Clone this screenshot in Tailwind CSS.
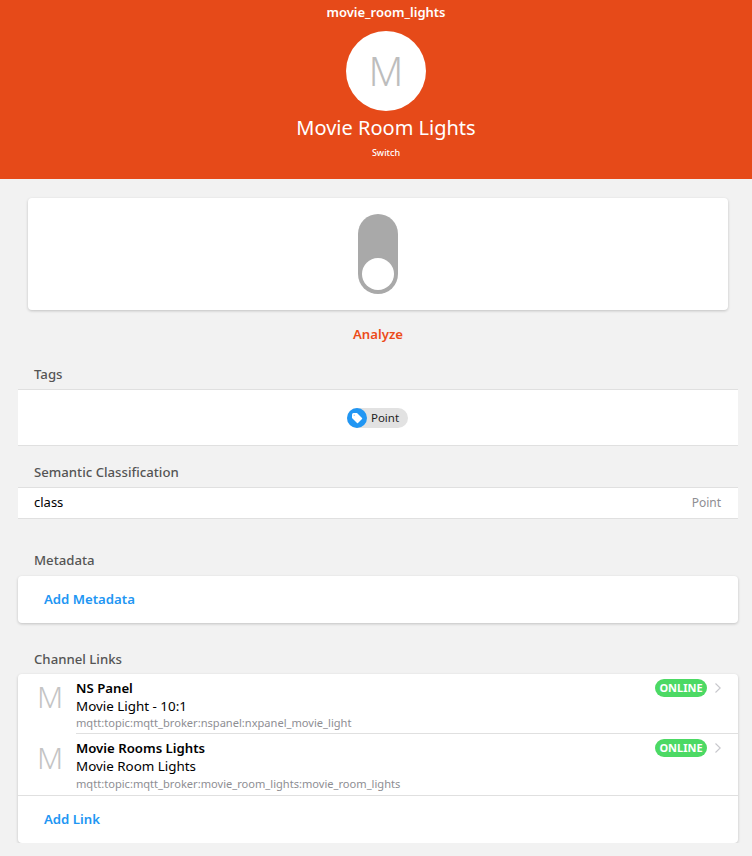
<!DOCTYPE html>
<html lang="en">
<head>
    <meta charset="UTF-8">
    <title>movie_room_lights</title>
    <script src="https://cdn.jsdelivr.net/npm/@tailwindcss/browser@4"></script>
</head>
<body class="bg-[#f2f2f2] font-['Noto_Sans',sans-serif] text-[14px] text-black overflow-hidden">

    <!-- Page is wider than the window, the right side gets cut off -->
    <div class="w-[772px]">

    <!-- Header -->
    <div class="h-[179px] bg-[#e64a19] text-white flex flex-col items-center">
        <div class="h-[25px] leading-[25px] text-[13px] font-semibold">movie_room_lights</div>
        <div class="mt-[6px] w-[80px] h-[80px] rounded-full bg-white flex items-center justify-center text-[#bdbdbd] text-[40px] font-light leading-none">M</div>
        <div class="mt-[3px] h-[28px] leading-[28px] text-[20px]">Movie Room Lights</div>
        <div class="mt-[4px] h-[14px] leading-[14px] text-[9px] font-medium">Switch</div>
    </div>

    <div class="w-[756px] px-[18px]">
        <!-- Toggle card -->
        <div class="mx-[10px] mt-[19px] h-[112px] bg-white rounded-[4px] shadow-[0_1px_3px_rgba(0,0,0,0.2)] flex items-center justify-center">
            <div class="relative w-[40px] h-[80px] rounded-full bg-[#a9a9a9]">
                <div class="absolute left-[4px] bottom-[4px] w-[32px] h-[32px] rounded-full bg-white"></div>
            </div>
        </div>

        <div class="mt-[14px] h-[20px] leading-[20px] text-center text-[13.2px] font-semibold text-[#ec4c1a]">Analyze</div>

        <!-- Tags -->
        <div class="mt-[22px] h-[16px] leading-[16px] pl-[16px] text-[13.2px] font-medium text-[#555]">Tags</div>
        <div class="mt-[7px] h-[57px] bg-white border-y border-[#e0e0e0] flex items-center justify-center">
            <div class="flex items-center h-[20px] rounded-full bg-[#e2e2e2] pr-[9px] mr-[1px]">
                <span class="w-[20px] h-[20px] rounded-full bg-[#2196f3] flex items-center justify-center">
                    <svg width="12" height="12" viewBox="0 0 12 12"><path d="M1 2.5 Q1 1 2.5 1 H6 L11 6 Q11.5 6.5 11 7 L7 11 Q6.5 11.5 6 11 L1 6 Z" fill="#fff"/><circle cx="3.3" cy="3.3" r="0.8" fill="#9fd0f8"/></svg>
                </span>
                <span class="ml-[4px] text-[11.5px] leading-[20px] text-[#222]">Point</span>
            </div>
        </div>

        <!-- Semantic Classification -->
        <div class="mt-[18px] h-[16px] leading-[16px] pl-[16px] text-[13.2px] font-medium text-[#555]">Semantic Classification</div>
        <div class="mt-[7px] h-[32px] bg-white border-y border-[#e0e0e0] flex items-center justify-between pl-[16px] pr-[17px]">
            <span class="text-[13px]">class</span>
            <span class="text-[12px] text-[#8e8e93]">Point</span>
        </div>

        <!-- Metadata -->
        <div class="mt-[33px] h-[16px] leading-[16px] pl-[16px] text-[13.2px] font-medium text-[#555]">Metadata</div>
        <div class="mt-[8px] h-[47px] bg-white rounded-[4px] shadow-[0_1px_3px_rgba(0,0,0,0.2)] flex items-center pl-[26px]">
            <span class="text-[13.2px] font-semibold text-[#2196f3]">Add Metadata</span>
        </div>

        <!-- Channel Links -->
        <div class="mt-[28px] h-[16px] leading-[16px] pl-[16px] text-[13.2px] font-medium text-[#555]">Channel Links</div>
        <div class="mt-[7px] bg-white rounded-[4px] shadow-[0_1px_3px_rgba(0,0,0,0.2)]">
            <div class="flex h-[60px] pl-[19px]">
                <div class="w-[39px] text-[30px] font-light leading-none text-[#c4c4c4] pt-[8px]">M</div>
                <div class="relative flex-1 border-b border-[#e0e0e0]">
                    <div class="pt-[5px] text-[13.2px] font-semibold leading-[18px]">NS Panel</div>
                    <div class="text-[13.4px] leading-[18px]">Movie Light - 10:1</div>
                    <div class="text-[11.1px] leading-[16px] text-[#8e8e93]">mqtt:topic:mqtt_broker:nspanel:nxpanel_movie_light</div>
                    <div class="absolute right-[17px] top-[5px] flex items-center gap-[8px]">
                        <span class="w-[52px] h-[18px] text-center rounded-full bg-[#4cd964] text-white text-[11px] font-bold leading-[18px]">ONLINE</span>
                        <svg width="6" height="10" viewBox="0 0 6 10"><path d="M0.5 0.5 L5.2 5 L0.5 9.5" fill="none" stroke="#c7c7cc" stroke-width="1.1"/></svg>
                    </div>
                </div>
            </div>
            <div class="flex h-[62px] pl-[19px] border-b border-[#e0e0e0]">
                <div class="w-[39px] text-[30px] font-light leading-none text-[#c4c4c4] pt-[9px]">M</div>
                <div class="relative flex-1">
                    <div class="pt-[5px] text-[13.2px] font-semibold leading-[18px]">Movie Rooms Lights</div>
                    <div class="text-[13.4px] leading-[18px]">Movie Room Lights</div>
                    <div class="text-[11.1px] leading-[17px] text-[#8e8e93]">mqtt:topic:mqtt_broker:movie_room_lights:movie_room_lights</div>
                    <div class="absolute right-[17px] top-[5px] flex items-center gap-[8px]">
                        <span class="w-[52px] h-[18px] text-center rounded-full bg-[#4cd964] text-white text-[11px] font-bold leading-[18px]">ONLINE</span>
                        <svg width="6" height="10" viewBox="0 0 6 10"><path d="M0.5 0.5 L5.2 5 L0.5 9.5" fill="none" stroke="#c7c7cc" stroke-width="1.1"/></svg>
                    </div>
                </div>
            </div>
            <div class="h-[47px] flex items-center pl-[26px]">
                <span class="text-[13.2px] font-semibold text-[#2196f3]">Add Link</span>
            </div>
        </div>
    </div>

    </div>

</body>
</html>
